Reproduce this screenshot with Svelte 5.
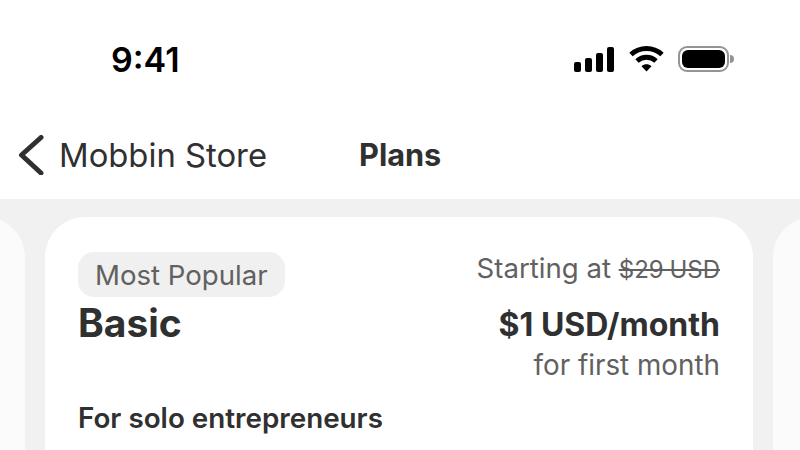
<script>
	const bars = [
		{ x: 0, y: 15, h: 10 },
		{ x: 11, y: 11, h: 14 },
		{ x: 22, y: 6, h: 19 },
		{ x: 33, y: 0, h: 25 }
	];
</script>

<div class="screen">
	<header class="status">
		<span class="time">9:41</span>
		<div class="indicators">
			<svg class="signal" width="40" height="25" viewBox="0 0 40 25">
				{#each bars as b}
					<rect x={b.x} y={b.y} width="7" height={b.h} rx="2" />
				{/each}
			</svg>
			<svg class="wifi" width="35" height="26" viewBox="0 0 35 26">
				<path d="M2 8.500C11 0.500 24 0.500 33 8.500" />
				<path d="M8 15C13.500 10 21.500 10 27 15" />
				<path class="tip" d="M12.500 20.200C15.500 17.600 19.500 17.600 22.500 20.200L17.500 25.500Z" />
			</svg>
			<div class="battery"><span class="charge"></span></div>
			<span class="nub"></span>
		</div>
	</header>

	<nav class="nav">
		<a class="back" href="#back">
			<svg width="26" height="40" viewBox="0 0 26 40">
				<path d="M23 2.500L3.500 20L23 38" />
			</svg>
			<span>Mobbin Store</span>
		</a>
		<h1>Plans</h1>
	</nav>

	<main class="carousel">
		<div class="card side"></div>
		<section class="card">
			<div class="top">
				<div class="left">
					<span class="badge">Most Popular</span>
					<h2>Basic</h2>
				</div>
				<div class="price">
					<p class="start">Starting at <s>$29 USD</s></p>
					<p class="amount">$1 USD/month</p>
					<p class="first">for first month</p>
				</div>
			</div>
			<h3>For solo entrepreneurs</h3>
		</section>
		<div class="card side"></div>
	</main>
</div>

<style>
	:global(body) { background: #fff; }

	.screen {
		width: 800px; height: 450px; overflow: hidden;
		display: flex; flex-direction: column;
		background: #fff;
		font-family: Inter, "Liberation Sans", sans-serif;
		color: #303030;
	}

	.status {
		height: 110px; flex: none; box-sizing: border-box;
		display: flex; justify-content: space-between; align-items: flex-start;
		padding: 40px 66px 0 111px;
	}
	.time { font-size: 34px; line-height: 40px; font-weight: 600; color: #000; }
	.indicators { display: flex; align-items: center; padding-top: 6px; }
	.signal { fill: #000; margin-right: 15px; }
	.wifi { margin-right: 14px; }
	.wifi path { fill: none; stroke: #000; stroke-width: 5; }
	.wifi .tip { fill: #000; stroke: none; }
	.battery {
		width: 51px; height: 26px; box-sizing: border-box;
		border: 2px solid #949494; border-radius: 9px; padding: 2px;
	}
	.charge { display: block; height: 100%; background: #000; border-radius: 6px; }
	.nub { width: 4px; height: 8px; margin-left: 1px; background: #949494; border-radius: 0 4px 4px 0; }

	.nav {
		height: 89px; flex: none; box-sizing: border-box;
		display: flex; align-items: center; position: relative;
		padding: 0 0 0 18px;
	}
	.back {
		display: flex; align-items: center; gap: 15px;
		color: #303030; text-decoration: none;
		font-size: 32.800px;
	}
	.back svg { fill: none; stroke: #303030; stroke-width: 5; stroke-linecap: round; stroke-linejoin: round; }
	.nav h1 {
		position: absolute; left: 359px; margin: 0;
		font-size: 30.700px; font-weight: 700;
	}

	.carousel {
		flex: 1; display: flex; gap: 20px;
		margin-left: -683px;
		padding-top: 18px;
		background: #f1f1f1;
	}
	.card {
		width: 708px; flex: none; box-sizing: border-box;
		background: #fff; border-radius: 40px 40px 0 0;
		padding: 35px 33px 0;
	}
	.side { background: #fbfbfb; }

	.top { display: flex; justify-content: space-between; }
	.left { display: flex; flex-direction: column; align-items: flex-start; }
	.badge {
		height: 45px; box-sizing: border-box; padding: 0 17px;
		display: flex; align-items: center;
		background: #f0f0f0; border-radius: 16px;
		font-size: 27.600px; color: #616161;
	}
	.left h2 { margin: 0; font-size: 39px; line-height: 52px; font-weight: 700; }

	.price { text-align: right; }
	.price p { margin: 0; }
	.price .start { font-size: 27.600px; line-height: 32px; color: #616161; }
	.start s { font-size: 24px; word-spacing: -1px; }
	.price .amount { font-size: 32px; line-height: 40px; font-weight: 700; margin-top: 19px; }
	.price .first { font-size: 27.800px; line-height: 38px; margin-top: 1px; color: #616161; }

	h3 { margin: 17px 0 0; font-size: 27.800px; line-height: 34px; font-weight: 600; }
</style>
